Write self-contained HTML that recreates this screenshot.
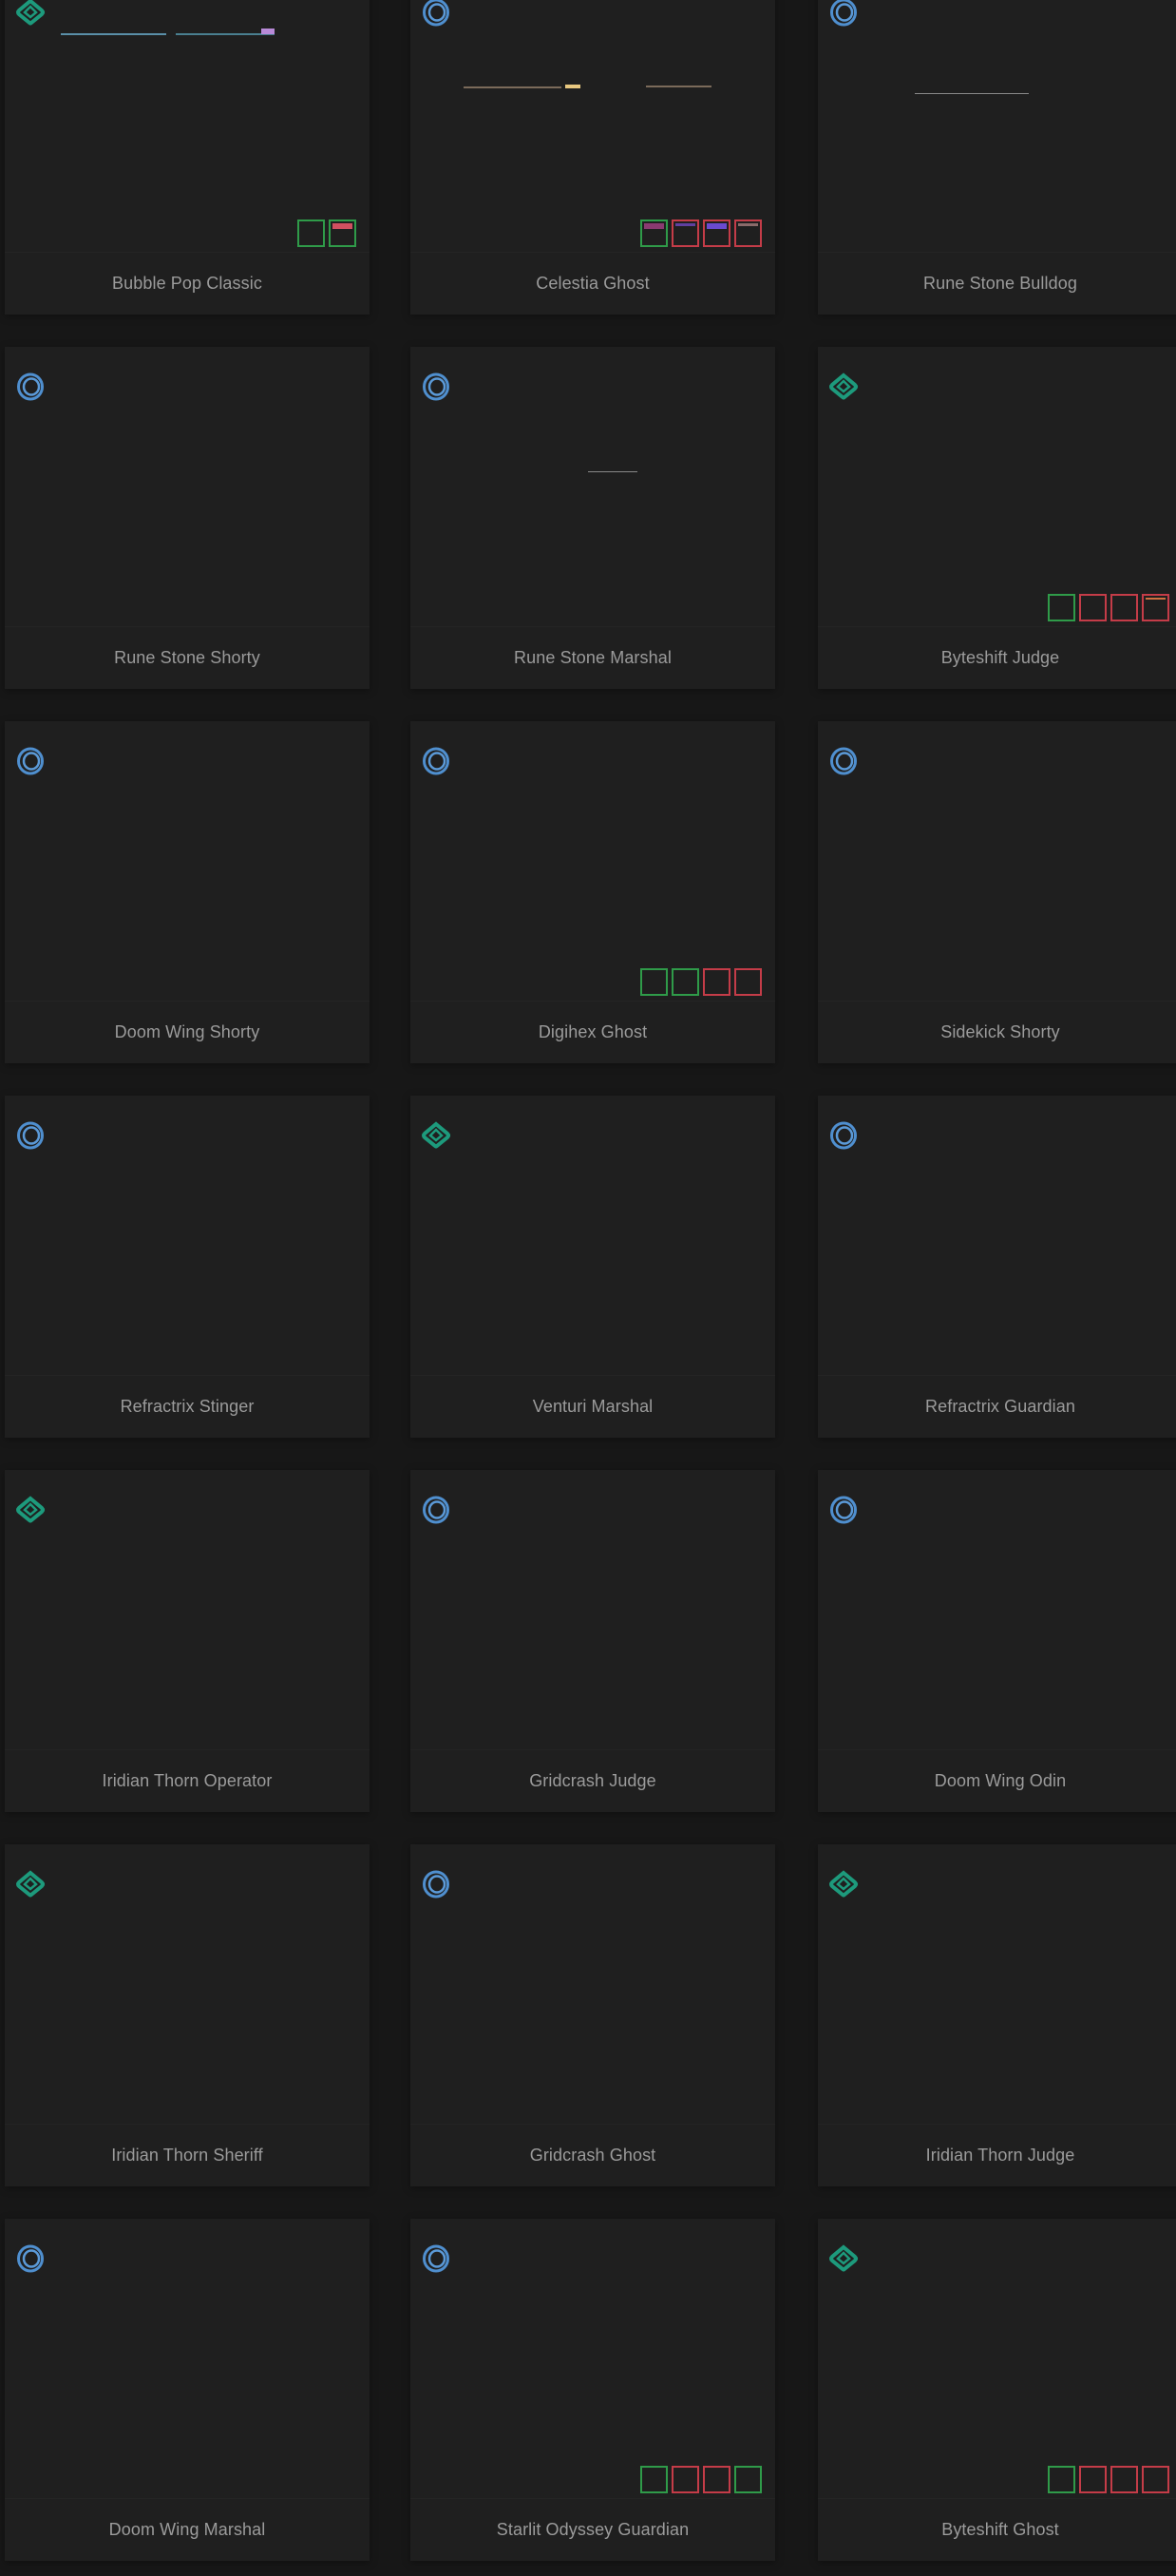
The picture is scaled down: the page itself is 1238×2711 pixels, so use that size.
<!DOCTYPE html>
<html><head><meta charset="utf-8"><style>
html,body{margin:0;padding:0;background:#171717;width:1238px;height:2711px;overflow:hidden;position:relative;font-family:"Liberation Sans",sans-serif}
.c{position:absolute;width:384px;height:360px;background:#1f1f1f;box-shadow:0 2px 8px rgba(0,0,0,.35)}
.c .sep{position:absolute;left:0;right:0;top:294px;height:1px;background:#242424}
.c .t{position:absolute;left:0;right:0;top:317px;text-align:center;color:#9b9b9b;font-size:18px;letter-spacing:.1px}
.c svg.i{position:absolute;left:9px;top:24px;width:36px;height:36px}
.sq{position:absolute;top:260px;right:14px;display:flex;gap:4px}
.sq b{width:25px;height:25px;border:2.5px solid #c43c48;display:block;position:relative;overflow:hidden}
.sq b.g{border-color:#2f9b49}
.sq b i{position:absolute;left:2px;right:2px;top:2px;height:6px;display:block}
.ln{position:absolute;height:2px;background:#7a6a5a}
</style></head><body>
<svg width="0" height="0" style="position:absolute"><defs>
<g id="blue"><ellipse cx="18" cy="18" rx="12.5" ry="13" fill="none" stroke="#4f8fcf" stroke-width="3"/><ellipse cx="19" cy="18" rx="8" ry="8.5" fill="none" stroke="#5b9ad8" stroke-width="2.5"/></g>
<g id="green"><path d="M18 6 L30 16 Q32 18 30 20 L19 29 Q18 30 17 29 L6 20 Q4 18 6 16 Z" fill="none" stroke="#1d9a7c" stroke-width="4"/><path d="M18 12 L24 18 L18 23 L12 18 Z" fill="none" stroke="#1d9a7c" stroke-width="2.5"/></g>
</defs></svg>

<!-- row 1 -->
<div class="c" style="left:5px;top:-29px"><svg class="i"><use href="#green"/></svg>
<div class="ln" style="left:59px;top:64px;width:111px;background:#5a8fa8"></div><div class="ln" style="left:180px;top:64px;width:104px;background:#4a7f90"></div><div class="ln" style="left:270px;top:59px;width:14px;height:6px;background:#b88ad8"></div>
<div class="sq"><b class="g"></b><b class="g"><i style="background:#d05060"></i></b></div><div class="sep"></div><div class="t">Bubble Pop Classic</div></div>
<div class="c" style="left:432px;top:-29px"><svg class="i"><use href="#blue"/></svg>
<div class="ln" style="left:56px;top:120px;width:103px"></div><div class="ln" style="left:163px;top:118px;width:16px;height:4px;background:#e8c880"></div><div class="ln" style="left:248px;top:119px;width:69px"></div>
<div class="sq"><b class="g"><i style="background:#8a3a70"></i></b><b><i style="background:#6040a0;height:3px"></i></b><b><i style="background:#6a4ad0"></i></b><b><i style="background:#8a6a6a;height:3px"></i></b></div><div class="sep"></div><div class="t">Celestia Ghost</div></div>
<div class="c" style="left:861px;top:-29px"><svg class="i"><use href="#blue"/></svg><div class="ln" style="left:102px;top:127px;width:120px;height:1px;background:#888"></div><div class="sep"></div><div class="t">Rune Stone Bulldog</div></div>

<!-- row 2 -->
<div class="c" style="left:5px;top:365px"><svg class="i"><use href="#blue"/></svg><div class="sep"></div><div class="t">Rune Stone Shorty</div></div>
<div class="c" style="left:432px;top:365px"><svg class="i"><use href="#blue"/></svg><div class="ln" style="left:187px;top:131px;width:52px;height:1px;background:#888"></div><div class="sep"></div><div class="t">Rune Stone Marshal</div></div>
<div class="c" style="left:861px;top:365px"><svg class="i"><use href="#green"/></svg>
<div class="sq"><b class="g"></b><b></b><b></b><b><i style="background:#d07040;height:2px"></i></b></div><div class="sep"></div><div class="t">Byteshift Judge</div></div>

<!-- row 3 -->
<div class="c" style="left:5px;top:759px"><svg class="i"><use href="#blue"/></svg><div class="sep"></div><div class="t">Doom Wing Shorty</div></div>
<div class="c" style="left:432px;top:759px"><svg class="i"><use href="#blue"/></svg>
<div class="sq"><b class="g"></b><b class="g"></b><b></b><b></b></div><div class="sep"></div><div class="t">Digihex Ghost</div></div>
<div class="c" style="left:861px;top:759px"><svg class="i"><use href="#blue"/></svg><div class="sep"></div><div class="t">Sidekick Shorty</div></div>

<!-- row 4 -->
<div class="c" style="left:5px;top:1153px"><svg class="i"><use href="#blue"/></svg><div class="sep"></div><div class="t">Refractrix Stinger</div></div>
<div class="c" style="left:432px;top:1153px"><svg class="i"><use href="#green"/></svg><div class="sep"></div><div class="t">Venturi Marshal</div></div>
<div class="c" style="left:861px;top:1153px"><svg class="i"><use href="#blue"/></svg><div class="sep"></div><div class="t">Refractrix Guardian</div></div>

<!-- row 5 -->
<div class="c" style="left:5px;top:1547px"><svg class="i"><use href="#green"/></svg><div class="sep"></div><div class="t">Iridian Thorn Operator</div></div>
<div class="c" style="left:432px;top:1547px"><svg class="i"><use href="#blue"/></svg><div class="sep"></div><div class="t">Gridcrash Judge</div></div>
<div class="c" style="left:861px;top:1547px"><svg class="i"><use href="#blue"/></svg><div class="sep"></div><div class="t">Doom Wing Odin</div></div>

<!-- row 6 -->
<div class="c" style="left:5px;top:1941px"><svg class="i"><use href="#green"/></svg><div class="sep"></div><div class="t">Iridian Thorn Sheriff</div></div>
<div class="c" style="left:432px;top:1941px"><svg class="i"><use href="#blue"/></svg><div class="sep"></div><div class="t">Gridcrash Ghost</div></div>
<div class="c" style="left:861px;top:1941px"><svg class="i"><use href="#green"/></svg><div class="sep"></div><div class="t">Iridian Thorn Judge</div></div>

<!-- row 7 -->
<div class="c" style="left:5px;top:2335px"><svg class="i"><use href="#blue"/></svg><div class="sep"></div><div class="t">Doom Wing Marshal</div></div>
<div class="c" style="left:432px;top:2335px"><svg class="i"><use href="#blue"/></svg>
<div class="sq"><b class="g"></b><b></b><b></b><b class="g"></b></div><div class="sep"></div><div class="t">Starlit Odyssey Guardian</div></div>
<div class="c" style="left:861px;top:2335px"><svg class="i"><use href="#green"/></svg>
<div class="sq"><b class="g"></b><b></b><b></b><b></b></div><div class="sep"></div><div class="t">Byteshift Ghost</div></div>
</body></html>
